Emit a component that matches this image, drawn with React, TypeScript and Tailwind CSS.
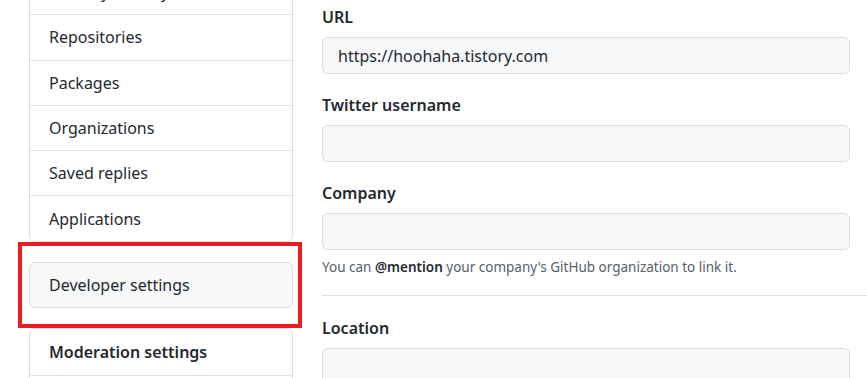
import React from 'react';

const navItems = ['Security & analysis', 'Repositories', 'Packages', 'Organizations', 'Saved replies', 'Applications'];

function Field({ label, value, help }: { label: string; value?: string; help?: React.ReactNode }) {
  return (
    <div className="flex flex-col">
      <label className="text-[16px] leading-[24px] font-semibold text-[#24292f]">{label}</label>
      <div className="mt-[8px] w-[528px] h-[37px] rounded-[6px] border border-[#d8dee4] bg-[#f6f8fa] px-[15px] flex items-center text-[16px] text-[#24292f]">
        {value}
      </div>
      {help && <p className="mt-[7px] text-[13.5px] leading-[20px] text-[#57606a]">{help}</p>}
    </div>
  );
}

export default function App() {
  return (
    <div
      className="h-[378px] w-[867px] overflow-hidden bg-white flex pl-[29px] gap-[29px]"
      style={{ fontFamily: '"Noto Sans", "Liberation Sans", sans-serif' }}
    >
      {/* Sidebar */}
      <div className="w-[264px] shrink-0 flex flex-col relative mt-[-32px]">
        <nav className="shrink-0 border border-[#d8dee4] rounded-[6px] overflow-hidden">
          {navItems.map((item, i) => (
            <div
              key={item}
              className={`h-[45.3px] flex items-center px-[19px] text-[16px] text-[#24292f] ${i > 0 ? 'border-t border-[#e1e4e8]' : ''}`}
            >
              {item}
            </div>
          ))}
        </nav>

        <div className="shrink-0 relative mt-[20px]">
          <div className="h-[46px] flex items-center px-[19px] rounded-[6px] border border-[#d8dee4] bg-[#f6f8fa] text-[16px] text-[#24292f]">
            Developer settings
          </div>
          {/* red annotation box */}
          <div className="absolute left-[-11px] right-[-9px] top-[-20px] bottom-[-20px] border-[4px] border-[#ec1c24] pointer-events-none" />
        </div>

        <div className="shrink-0 mt-[20px] border border-[#d8dee4] rounded-[6px] overflow-hidden">
          <div className="h-[46px] flex items-center px-[19px] text-[16px] font-semibold text-[#24292f]">
            Moderation settings
          </div>
          <div className="h-[45px] border-t border-[#e1e4e8]" />
        </div>
      </div>

      {/* Main */}
      <div className="flex-1 min-w-0 flex flex-col pt-[5px]">
        <div className="flex flex-col gap-[19px]">
          <Field label="URL" value="https://hoohaha.tistory.com" />
          <Field label="Twitter username" />
          <Field
            label="Company"
            help={
              <>
                You can <span className="font-semibold text-[#24292f]">@mention</span> your company's GitHub organization to link it.
              </>
            }
          />
        </div>
        <hr className="shrink-0 mt-[18px] border-t border-[#d8dee4]" />
        <div className="shrink-0 mt-[20px]">
          <Field label="Location" />
        </div>
      </div>
    </div>
  );
}
